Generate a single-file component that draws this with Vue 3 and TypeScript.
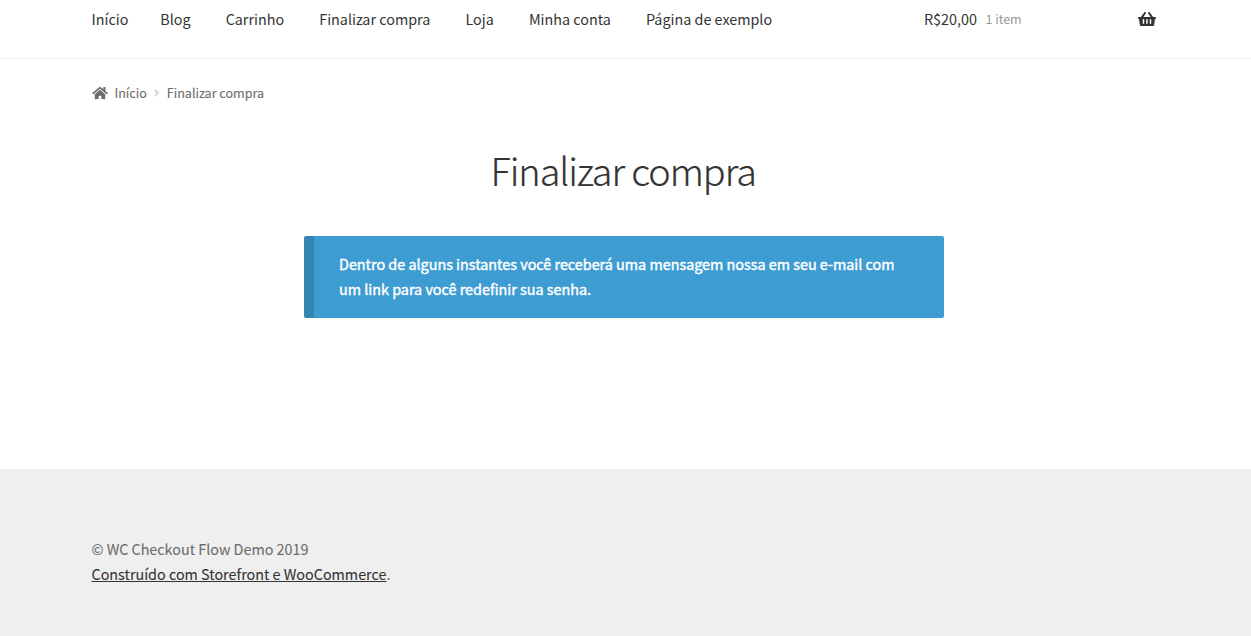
<script setup lang="ts">
const links: string[] = ['Início', 'Blog', 'Carrinho', 'Finalizar compra', 'Loja', 'Minha conta', 'Página de exemplo']
</script>

<template>
  <div class="page">
    <header class="header">
      <nav class="nav">
        <a v-for="link in links" :key="link" class="nav-link">{{ link }}</a>
      </nav>
      <a class="cart">
        <span class="amount">R$20,00</span>
        <span class="count">1 item</span>
        <svg class="basket" viewBox="0 0 576 512" aria-hidden="true">
          <path fill="currentColor" d="M576 216v16c0 13.255-10.745 24-24 24h-8l-26.113 182.788C514.509 462.435 494.257 480 470.37 480H105.63c-23.887 0-44.139-17.565-47.518-41.212L32 256h-8c-13.255 0-24-10.745-24-24v-16c0-13.255 10.745-24 24-24h67.341l106.78-146.821c10.395-14.292 30.407-17.453 44.701-7.058 14.293 10.395 17.453 30.408 7.058 44.701L170.477 192h235.046L326.12 82.821c-10.395-14.292-7.234-34.306 7.059-44.701 14.291-10.395 34.306-7.235 44.701 7.058L484.659 192H552c13.255 0 24 10.745 24 24zM312 392V280c0-13.255-10.745-24-24-24s-24 10.745-24 24v112c0 13.255 10.745 24 24 24s24-10.745 24-24zm112 0V280c0-13.255-10.745-24-24-24s-24 10.745-24 24v112c0 13.255 10.745 24 24 24s24-10.745 24-24zm-224 0V280c0-13.255-10.745-24-24-24s-24 10.745-24 24v112c0 13.255 10.745 24 24 24s24-10.745 24-24z" />
        </svg>
      </a>
    </header>

    <div class="breadcrumb">
      <svg class="home" viewBox="0 0 576 512" aria-hidden="true">
        <path fill="currentColor" d="M280.37 148.26L96 300.11V464a16 16 0 0 0 16 16l112.06-.29a16 16 0 0 0 15.92-16V368a16 16 0 0 1 16-16h64a16 16 0 0 1 16 16v95.64a16 16 0 0 0 16 16.05L464 480a16 16 0 0 0 16-16V300L295.67 148.26a12.19 12.19 0 0 0-15.3 0zM571.6 251.47L488 182.56V44.05a12 12 0 0 0-12-12h-56a12 12 0 0 0-12 12v72.61L318.47 43a48 48 0 0 0-61 0L4.34 251.47a12 12 0 0 0-1.6 16.9l25.5 31A12 12 0 0 0 45.15 301l235.22-193.74a12.19 12.19 0 0 1 15.3 0L530.9 301a12 12 0 0 0 16.9-1.6l25.5-31a12 12 0 0 0-1.7-16.93z" />
      </svg>
      <a class="crumb-link">Início</a>
      <svg class="chevron" viewBox="0 0 5 8" aria-hidden="true">
        <path d="M.8 .8 4 4 .8 7.2" fill="none" stroke="currentColor" stroke-width="1.8" />
      </svg>
      <span class="crumb-current">Finalizar compra</span>
    </div>

    <main class="content">
      <h1 class="title">Finalizar compra</h1>
      <div class="notice">Dentro de alguns instantes você receberá uma mensagem nossa em seu e-mail com um link para você redefinir sua senha.</div>
    </main>

    <footer class="footer">
      <div>© WC Checkout Flow Demo 2019</div>
      <div><a class="credit">Construído com Storefront e WooCommerce</a>.</div>
    </footer>
  </div>
</template>

<style>
body {
  margin: 0;
  background: #fff;
}
</style>

<style scoped>
.page {
  height: 636px;
  overflow: hidden;
  display: flex;
  flex-direction: column;
  font-family: "Source Sans Pro", "Noto Sans CJK JP", sans-serif;
  font-size: 14.35px;
  line-height: 25px;
  color: #6d6d6d;
  -webkit-text-stroke: 0.1px currentColor;
}
.header {
  box-sizing: border-box;
  flex: none;
  height: 59px;
  padding: 6px 95.5px 0 91.5px;
  display: flex;
  align-items: flex-start;
  border-bottom: 1px solid #eee;
  color: #333;
  white-space: nowrap;
  -webkit-text-stroke: 0;
}
.nav {
  display: flex;
  gap: 35.15px;
  width: 832.5px;
}
.nav-link:first-child {
  margin-right: -3.3px;
}
.cart {
  flex: 1;
  display: flex;
}
.count {
  margin-left: 8.5px;
  font-size: 12.55px;
  color: #999;
}
.basket {
  width: 18px;
  height: 16px;
  margin: 5px 0 0 auto;
}
.breadcrumb {
  display: flex;
  align-items: center;
  height: 25px;
  padding: 21px 91.5px 0 91.5px;
  font-size: 12.57px;
}
.home {
  width: 16px;
  height: 14px;
}
.crumb-link {
  margin-left: 7px;
}
.chevron {
  width: 5px;
  height: 8px;
  margin: 0 7.5px 0 7.5px;
  color: #d3d3d3;
}
.content {
  flex: 1;
  display: flex;
  flex-direction: column;
  align-items: center;
}
.title {
  margin: 40px 4.5px 0 0;
  height: 50px;
  line-height: 50px;
  font-size: 37.8px;
  font-weight: 300;
  letter-spacing: -1.05px;
  color: #333;
  -webkit-text-stroke: 0.2px currentColor;
}
.notice {
  box-sizing: border-box;
  width: 640px;
  margin: 41px 3px 0 0;
  padding: 15px 32px 17px 25px;
  border-left: 10px solid #3585b2;
  border-radius: 2px;
  background: #3d9cd2;
  color: #fff;
  font-size: 14.37px;
  -webkit-text-stroke: 0.4px currentColor;
}
.footer {
  box-sizing: border-box;
  flex: none;
  height: 167px;
  padding: 67px 91.5px 0;
  background: #efefef;
}
.credit {
  color: #333;
  text-decoration: underline;
}
</style>
